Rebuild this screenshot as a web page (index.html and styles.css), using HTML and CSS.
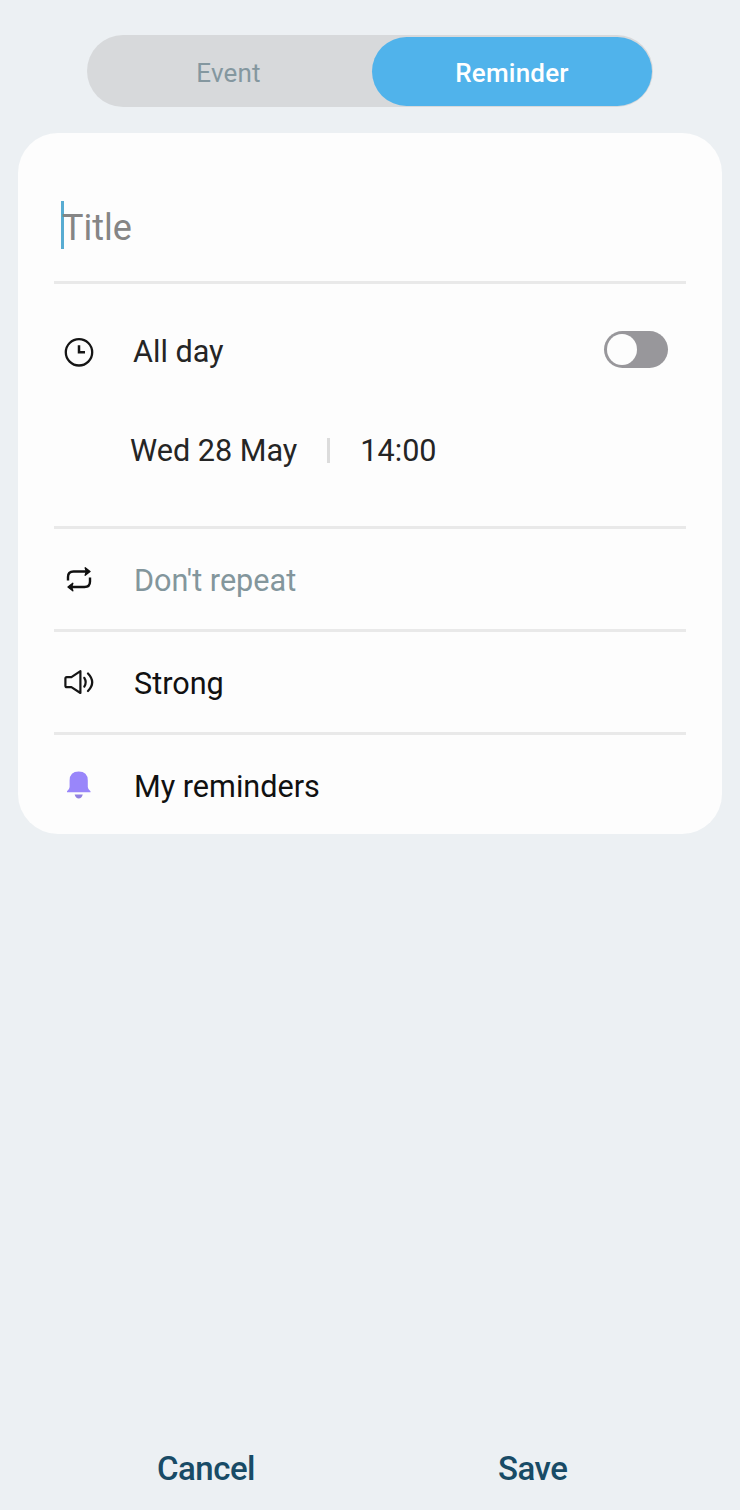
FILE: index.html
```html
<!DOCTYPE html>
<html lang="en">
<head>
    <meta charset="utf-8">
    <title>New reminder</title>
    <link rel="stylesheet" href="styles.css">
</head>
<body>
<div class="tabs">
    <div class="tab">Event</div>
    <div class="tab active">Reminder</div>
</div>

<div class="card">
    <div class="title-row">
        <span class="cursor"></span>
        <span class="title">Title</span>
    </div>

    <div class="time-section">
        <div class="row all-day">
            <svg class="icon" viewBox="0 0 32 32">
                <circle cx="16" cy="16.3" r="13.2" fill="none" stroke="#151515" stroke-width="2.3"/>
                <path d="M16 9.3V16.3H22" fill="none" stroke="#151515" stroke-width="2.5"/>
            </svg>
            <span class="label">All day</span>
            <span class="switch"><span class="knob"></span></span>
        </div>
        <div class="date-row">
            <span class="date">Wed 28 May</span>
            <span class="separator"></span>
            <span class="time">14:00</span>
        </div>
    </div>

    <div class="row repeat">
        <svg class="icon" viewBox="0 0 32 32">
            <g fill="none" stroke="#101010" stroke-width="2.4">
                <path d="M5 16.5V13Q5 7.5 10.5 7.5H25"/>
                <path d="M27 13.5V17.5Q27 23 21.5 23H7"/>
            </g>
            <g fill="#101010" stroke="#101010" stroke-width="1.4" stroke-linejoin="round">
                <path d="M22.2 3.8L27 7.5L22.2 11.2L23.4 7.5Z"/>
                <path d="M9.8 19.3L5 23L9.8 26.7L8.6 23Z"/>
            </g>
        </svg>
        <span class="label">Don't repeat</span>
    </div>

    <div class="row sound">
        <svg class="icon" viewBox="0 0 32 32">
            <g fill="none" stroke="#151515" stroke-width="2.2" stroke-linejoin="round" stroke-linecap="round">
                <path d="M3.8 10.2H8.4L17.4 4.2V26L8.4 20.2H3.8Q2.4 20.2 2.4 18.8V11.6Q2.4 10.2 3.8 10.2Z"/>
                <path d="M21.3 10.8Q24.1 15.2 21.3 19.6"/>
                <path d="M25 6.5Q33.4 15.2 25 24"/>
            </g>
        </svg>
        <span class="label">Strong</span>
    </div>

    <div class="row calendar">
        <svg class="icon" viewBox="0 0 32 32">
            <path d="M6.6 18V9.5Q6.8 0.6 15.7 0.6Q24.6 0.6 24.8 9.5V16Q25 18.8 27.5 20.2V21.2H4V20.2Q6.4 18.8 6.6 16Z" fill="#9986fa"/>
            <path d="M11.6 23.4H19.8Q18.6 27.4 15.7 27.4Q12.8 27.4 11.6 23.4Z" fill="#9181e0"/>
        </svg>
        <span class="label">My reminders</span>
    </div>
</div>

<div class="buttons">
    <span class="cancel">Cancel</span>
    <span class="save">Save</span>
</div>
</body>
</html>
```
FILE: styles.css
```css
* {
  box-sizing: border-box;
}

body {
  margin: 0;
  height: 1510px;
  padding: 35px 18px 0;
  display: flex;
  flex-direction: column;
  background-color: #ecf0f3;
  font-family: Roboto, sans-serif;
  color: #252525;
}

.tabs {
  display: flex;
  width: 566px;
  height: 72px;
  margin-left: 69px;
  padding: 2px 1px 1px 0;
  border-radius: 36px;
  background-color: #d7d9db;
}

.tab {
  display: flex;
  flex: 1;
  align-items: center;
  justify-content: center;
  padding: 2px 2px 0 0;
  font-size: 26px;
  letter-spacing: 0.2px;
  color: #84979f;
}

.tab.active {
  flex: 0 0 280px;
  padding-right: 0;
  border-radius: 35px;
  background-color: #50b3eb;
  font-weight: 500;
  color: white;
}

.card {
  height: 701px;
  margin-top: 26px;
  padding: 0 36px;
  border-radius: 40px;
  background-color: #fdfdfd;
}

.title-row {
  display: flex;
  height: 151px;
  padding: 68px 0 0 7px;
  border-bottom: 3px solid #e9e9e9;
}

.cursor {
  width: 3px;
  height: 48px;
  background-color: #58acd2;
}

.title {
  margin-left: -2px;
  font-size: 36px;
  line-height: 54px;
  color: #858585;
}

.time-section {
  height: 245px;
  padding-top: 33px;
  border-bottom: 3px solid #e9e9e9;
}

.row {
  display: flex;
  align-items: center;
  height: 103px;
  padding: 2px 0 0 9px;
  border-bottom: 3px solid #e9e9e9;
  font-size: 30.6px;
}

.icon {
  width: 32px;
  height: 32px;
}

.label {
  margin-left: 39px;
}

.all-day {
  height: 70px;
  padding: 0 18px 0 9px;
  border-bottom: none;
}

.all-day .label {
  margin: 0 0 1px 38px;
}

.switch {
  display: flex;
  width: 64px;
  height: 37px;
  margin: 0 0 5px auto;
  padding: 3px;
  border-radius: 19px;
  background-color: #98979b;
}

.knob {
  width: 30px;
  height: 31px;
  border-radius: 50%;
  background-color: #fdfdfd;
}

.date-row {
  display: flex;
  align-items: center;
  height: 62px;
  margin-top: 32px;
  padding-left: 76px;
  font-size: 30.6px;
}

.separator {
  width: 3px;
  height: 25px;
  margin: 0 30px;
  background-color: #dcdcdc;
}

.repeat .label {
  color: #83969c;
}

.sound,
.calendar {
  color: #111;
}

.calendar {
  padding-top: 0;
  border-bottom: none;
}

.buttons {
  display: flex;
  margin-top: auto;
  padding: 0 0 22px 139px;
  font-size: 33px;
  font-weight: 500;
  letter-spacing: -0.5px;
  color: #184b66;
}

.save {
  margin-left: 243px;
}
```
